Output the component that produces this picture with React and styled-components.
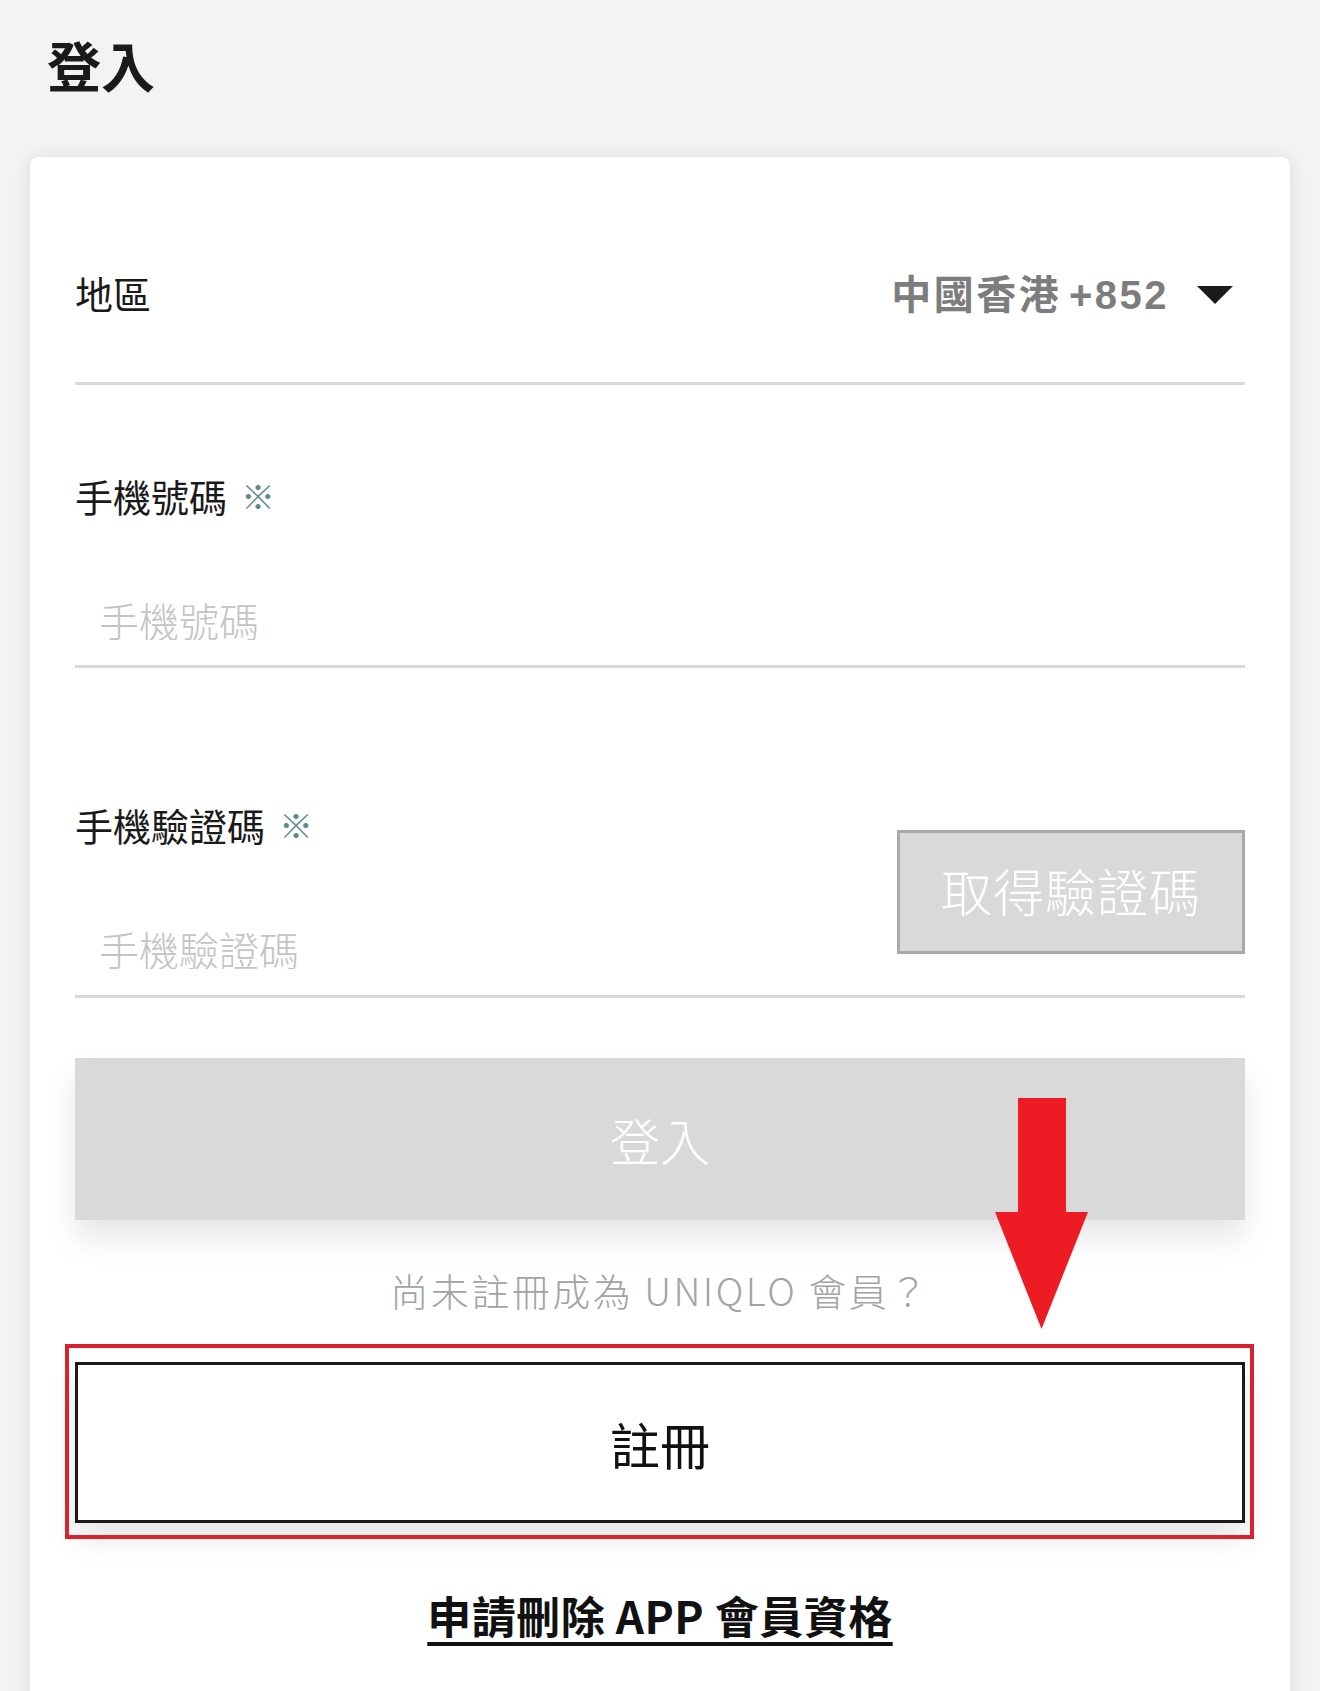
import React from 'react';
import styled, { createGlobalStyle } from 'styled-components';

const GlobalStyle = createGlobalStyle`
  html, body {
    margin: 0;
    padding: 0;
    background: #f3f3f3;
  }
  body {
    font-family: "Noto Sans CJK TC", "Noto Sans", "Liberation Sans", sans-serif;
    color: #1a1a1a;
  }
  * {
    box-sizing: border-box;
  }
`;

const Page = styled.div`
  width: 1320px;
  height: 1691px;
  overflow: hidden;
  background: #f3f3f3;
`;

const Title = styled.h1`
  margin: 0;
  padding: 38px 0 0 47px;
  height: 157px;
  font-size: 54px;
  line-height: 1;
  font-weight: 700;
  color: #1a1a1a;
`;

const Card = styled.div`
  margin-left: 30px;
  width: 1260px;
  min-height: 1600px;
  background: #fff;
  border-radius: 8px;
  box-shadow: 0 2px 18px rgba(0, 0, 0, 0.1);
  padding: 0 45px;
`;

const RegionRow = styled.div`
  display: flex;
  align-items: center;
  justify-content: space-between;
  padding: 114px 0 67px;
  border-bottom: 3px solid #d9d9d9;
`;

const Label = styled.div`
  font-size: 38px;
  line-height: 1;
  font-weight: 400;
  color: #1a1a1a;
  display: flex;
  align-items: center;
`;

const Required = styled.span`
  color: #5c8a8c;
  font-size: 34px;
  margin-left: 14px;
`;

const RegionValue = styled.div`
  display: flex;
  align-items: center;
  gap: 28px;
  font-family: "Liberation Sans", "Noto Sans CJK TC", sans-serif;
  font-size: 40px;
  line-height: 1;
  font-weight: 700;
  letter-spacing: 2.5px;
  color: #7d7d7d;
  padding-top: 4px;
`;

const Code = styled.span`
  margin-left: -6px;
`;

const Caret = styled.svg`
  width: 36px;
  height: 18px;
  margin-right: 12px;
`;

const Field = styled.div`
  display: flex;
  align-items: flex-start;
  justify-content: space-between;
  margin-top: ${(p) => p.$top}px;
  padding-bottom: ${(p) => p.$bottom}px;
  border-bottom: 3px solid #d9d9d9;
`;

const FieldMain = styled.div`
  display: flex;
  flex-direction: column;
  gap: 85px;
  flex: 1;
`;

const Input = styled.input`
  border: none;
  outline: none;
  background: transparent;
  padding: 0 0 0 24px;
  height: 40px;
  font-family: inherit;
  font-size: 40px;
  line-height: 40px;
  font-weight: 300;
  color: #1a1a1a;
  &::placeholder {
    color: #c4c4c4;
  }
`;

const CodeButton = styled.button`
  margin-top: 24px;
  width: 348px;
  height: 124px;
  background: #d9d9d9;
  border: 3px solid #a9a9a9;
  color: #fff;
  font-family: inherit;
  font-size: 51px;
  font-weight: 300;
  letter-spacing: 1px;
  padding: 0 0 4px;
`;

const LoginButton = styled.button`
  display: block;
  width: 100%;
  height: 162px;
  margin-top: 60px;
  background: #d9d9d9;
  border: none;
  color: #fff;
  font-family: inherit;
  font-size: 50px;
  font-weight: 300;
  box-shadow: 0 18px 30px rgba(0, 0, 0, 0.1);
`;

const Prompt = styled.p`
  margin: 51px 0 0;
  text-align: center;
  font-size: 38px;
  line-height: 1;
  font-weight: 300;
  letter-spacing: 2.5px;
  color: #a3a3a3;
`;

const RegisterWrap = styled.div`
  position: relative;
  margin-top: 53px;
`;

const RegisterButton = styled.button`
  display: block;
  width: 100%;
  height: 161px;
  background: #fff;
  border: 3px solid #1a1a1a;
  color: #111;
  font-family: inherit;
  font-size: 50px;
  font-weight: 400;
  box-shadow: 0 16px 28px rgba(0, 0, 0, 0.1);
`;

const Highlight = styled.div`
  position: absolute;
  left: -10px;
  right: -9px;
  top: -18px;
  bottom: -16px;
  border: 4px solid #d8232e;
  pointer-events: none;
`;

const Arrow = styled.svg`
  position: absolute;
  left: 920px;
  top: -264px;
  width: 93px;
  height: 231px;
`;

const DeleteLink = styled.a`
  display: block;
  margin-top: 70px;
  text-align: center;
  font-size: 44px;
  line-height: 1;
  font-weight: 700;
  letter-spacing: 0.5px;
  color: #111;
  text-decoration: underline;
  text-decoration-thickness: 4px;
  text-underline-offset: 8px;
`;

export default function App() {
  return (
    <Page>
      <GlobalStyle />
      <Title>登入</Title>
      <Card>
        <RegionRow>
          <Label>地區</Label>
          <RegionValue>
            <span>
              中國香港 <Code>+852</Code>
            </span>
            <Caret viewBox="0 0 36 18">
              <path d="M0 0 H36 L18 18 Z" fill="#1a1a1a" />
            </Caret>
          </RegionValue>
        </RegionRow>

        <Field $top={92} $bottom={25}>
          <FieldMain>
            <Label>
              手機號碼<Required>※</Required>
            </Label>
            <Input placeholder="手機號碼" />
          </FieldMain>
        </Field>

        <Field $top={138} $bottom={26}>
          <FieldMain>
            <Label>
              手機驗證碼<Required>※</Required>
            </Label>
            <Input placeholder="手機驗證碼" />
          </FieldMain>
          <CodeButton>取得驗證碼</CodeButton>
        </Field>

        <LoginButton>登入</LoginButton>

        <Prompt>尚未註冊成為 UNIQLO 會員？</Prompt>

        <RegisterWrap>
          <RegisterButton>註冊</RegisterButton>
          <Highlight />
          <Arrow viewBox="0 0 93 231">
            <path d="M23 0 H71 V114 H93 L46.5 231 L0 114 H23 Z" fill="#ed1c24" />
          </Arrow>
        </RegisterWrap>

        <DeleteLink href="#">申請刪除 APP 會員資格</DeleteLink>
      </Card>
    </Page>
  );
}
